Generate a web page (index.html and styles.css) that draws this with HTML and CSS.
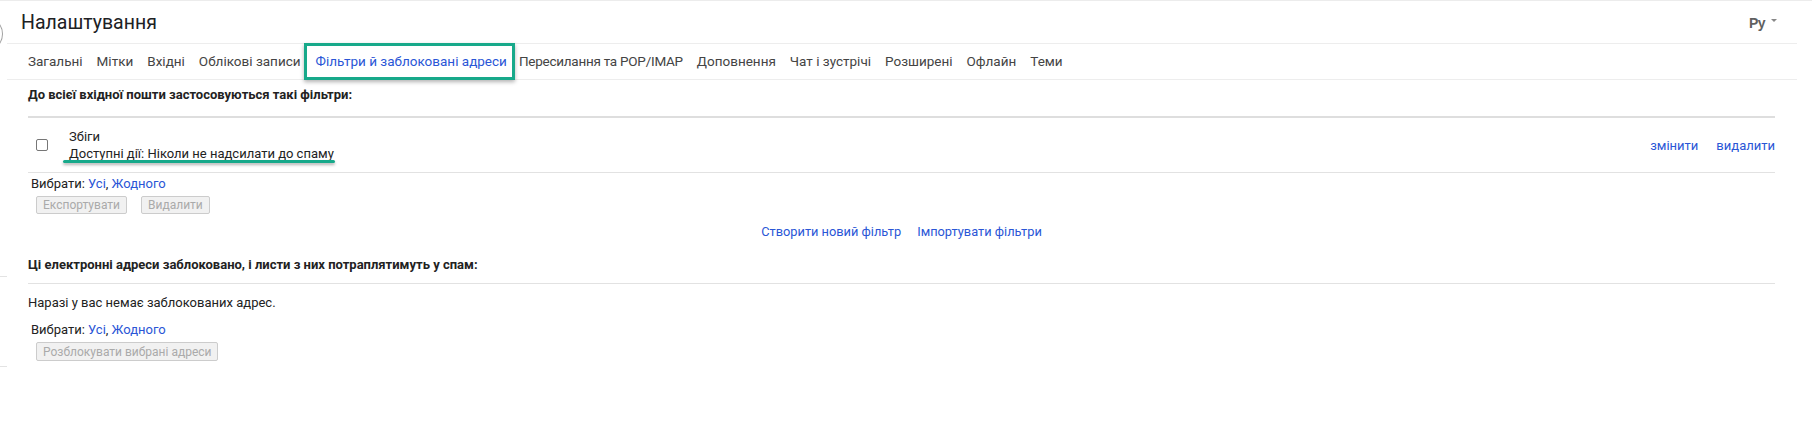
FILE: index.html
```html
<!DOCTYPE html>
<html lang="uk">
<head>
<meta charset="utf-8">
<title>Налаштування</title>
<link rel="stylesheet" href="styles.css">
</head>
<body>
<div class="page">
  <div class="edge-arc"></div>
  <div class="edge-line edge-line-1"></div>
  <div class="edge-line edge-line-2"></div>

  <header class="header">
    <h1 class="title">Налаштування</h1>
    <div class="input-tool">
      <span class="input-tool-label">Ру</span>
      <span class="input-tool-caret"></span>
    </div>
  </header>

  <nav class="tabs">
    <a class="tab">Загальні</a>
    <a class="tab">Мітки</a>
    <a class="tab">Вхідні</a>
    <a class="tab">Облікові записи</a>
    <a class="tab tab-active">Фільтри й заблоковані адреси<span class="highlight-box"></span></a>
    <a class="tab tab-tight">Пересилання та POP/IMAP</a>
    <a class="tab">Доповнення</a>
    <a class="tab">Чат і зустрічі</a>
    <a class="tab">Розширені</a>
    <a class="tab">Офлайн</a>
    <a class="tab">Теми</a>
  </nav>

  <main class="content">
    <h2 class="section-heading section-heading-first">До всієї вхідної пошти застосовуються такі фільтри:</h2>

    <div class="filter-row">
      <div class="filter-check"><span class="checkbox"></span></div>
      <div class="filter-text">
        <div>Збіги</div>
        <div class="filter-action">Доступні дії: Ніколи не надсилати до спаму<span class="highlight-underline"></span></div>
      </div>
      <div class="filter-links">
        <a class="link">змінити</a>
        <a class="link">видалити</a>
      </div>
    </div>

    <div class="select-row">Вибрати: <a class="link">Усі</a>, <a class="link">Жодного</a></div>
    <div class="button-row">
      <span class="btn">Експортувати</span>
      <span class="btn">Видалити</span>
    </div>

    <div class="create-row">
      <a class="link">Створити новий фільтр</a>
      <a class="link">Імпортувати фільтри</a>
    </div>

    <h2 class="section-heading section-heading-second">Ці електронні адреси заблоковано, і листи з них потраплятимуть у спам:</h2>

    <div class="empty-note">Наразі у вас немає заблокованих адрес.</div>

    <div class="select-row select-row-second">Вибрати: <a class="link">Усі</a>, <a class="link">Жодного</a></div>
    <div class="button-row">
      <span class="btn btn-tall">Розблокувати вибрані адреси</span>
    </div>
  </main>
</div>
</body>
</html>
```

FILE: styles.css
```css
* {
  box-sizing: border-box;
}

html, body {
  margin: 0;
  padding: 0;
  background: #ffffff;
}

body {
  font-family: Roboto, "Liberation Sans", Arial, sans-serif;
  font-size: 13px;
  color: #222222;
  width: 1812px;
  height: 437px;
  overflow: hidden;
}

.page {
  position: relative;
  border-top: 1px solid #ececec;
  height: 437px;
}

/* decorative edge of neighbouring panel at the far left */
.edge-arc {
  position: absolute;
  left: -15px;
  top: 20px;
  width: 18px;
  height: 26px;
  border-radius: 50%;
  border: 1px solid #a0a0a0;
}

.edge-line {
  position: absolute;
  left: 0;
  width: 7px;
  height: 1px;
  background: #e3e3e3;
}

.edge-line-1 { top: 275px; }
.edge-line-2 { top: 365px; }

.header {
  display: flex;
  align-items: center;
  justify-content: space-between;
  height: 43px;
  margin: 0 15px 0 7px;
  padding: 0 20px 0 14px;
  border-bottom: 1px solid #ededed;
}

.title {
  margin: 0;
  font-family: Roboto, "Open Sans", sans-serif;
  font-size: 19.5px;
  font-weight: 400;
  color: #202124;
  line-height: 24px;
  padding-top: 2px;
}

.input-tool {
  display: flex;
  align-items: center;
  gap: 6px;
  padding-top: 2px;
}

.input-tool-label {
  font-family: "Liberation Sans", Arial, sans-serif;
  font-size: 14px;
  font-weight: 700;
  color: #5f5f5f;
  letter-spacing: -0.5px;
}

.input-tool-caret {
  width: 0;
  height: 0;
  border-left: 3px solid transparent;
  border-right: 3px solid transparent;
  border-top: 3px solid #888888;
  margin-top: -6px;
}

.tabs {
  display: flex;
  align-items: center;
  gap: 14px;
  height: 36px;
  margin: 0 15px 0 7px;
  padding: 0 0 0 21px;
  border-bottom: 1px solid #ededed;
}

.tab {
  position: relative;
  color: #444444;
  font-size: 13.5px;
  line-height: 17px;
  white-space: nowrap;
  cursor: pointer;
}

.tab-tight {
  letter-spacing: -0.25px;
  margin-left: -2px;
}

.tab-active {
  color: #2a56d6;
  margin-left: 1px;
}

.highlight-box {
  position: absolute;
  left: -12px;
  right: -8px;
  top: -10px;
  bottom: -10px;
  border: 3px solid #17a98a;
  box-shadow: 0 2px 4px rgba(0, 0, 0, 0.3);
  pointer-events: none;
}

.content {
  margin: 0 37px 0 28px;
}

.section-heading {
  margin: 0;
  font-size: 13px;
  font-weight: 700;
  line-height: 16px;
  color: #222222;
}

.section-heading-first {
  padding: 7px 0 13px;
  border-bottom: 2px solid #dedede;
}

.section-heading-second {
  margin-top: 17px;
  padding: 0 0 10px;
  border-bottom: 1px solid #e2e2e2;
}

.filter-row {
  display: grid;
  grid-template-columns: 41px 1fr auto;
  align-items: center;
  padding: 10px 0;
  border-bottom: 1px solid #e2e2e2;
  line-height: 17px;
}

.filter-check {
  padding-left: 8px;
  display: flex;
  align-items: center;
}

.checkbox {
  display: block;
  width: 12px;
  height: 12px;
  border: 1px solid #767676;
  border-radius: 2px;
  background: #ffffff;
  margin-top: -1px;
}

.filter-action {
  position: relative;
  display: inline-block;
}

.highlight-underline {
  position: absolute;
  left: -6px;
  right: -1px;
  bottom: -1px;
  height: 3px;
  background: #17a98a;
  border-radius: 2px;
  box-shadow: 0 2px 3px rgba(0, 0, 0, 0.3);
}

.filter-links {
  display: flex;
  gap: 18px;
}

.link {
  color: #2a56d6;
  cursor: pointer;
  text-decoration: none;
}

.select-row {
  padding: 2px 0 0 3px;
  line-height: 17px;
}

.select-row-second {
  margin-top: 10px;
  padding-top: 0;
}

.button-row {
  display: flex;
  gap: 14px;
  padding-left: 8px;
  margin-top: 4px;
}

.btn {
  display: inline-flex;
  align-items: center;
  height: 18px;
  padding: 0 6px;
  font-size: 12px;
  color: #aaaaaa;
  background: #f1f1f1;
  border: 1px solid #cccccc;
  border-radius: 2px;
}

.btn-tall {
  height: 19px;
}

.create-row {
  display: flex;
  justify-content: center;
  gap: 16px;
  margin-top: 9px;
  line-height: 17px;
  font-size: 12.8px;
}

.empty-note {
  padding-top: 10px;
  line-height: 17px;
}
```
